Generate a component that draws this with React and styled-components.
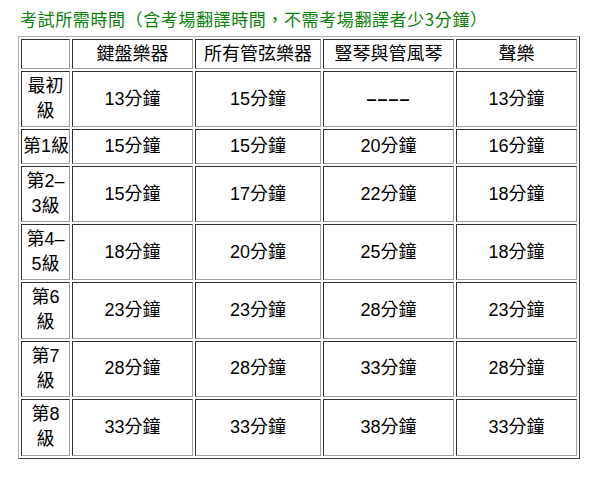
import React from "react";
import styled, { createGlobalStyle } from "styled-components";

const Global = createGlobalStyle`
  html, body { margin: 0; padding: 0; background: #fff; }
  body { font-family: "Liberation Sans", "Noto Sans CJK TC", sans-serif; }
`;

const Page = styled.div`
  padding: 7px 0 0 18px;
`;

const Title = styled.div`
  font-family: "AR PL UKai TW", "AR PL UKai", "Noto Sans CJK TC", serif;
  font-size: 17px;
  line-height: 24px;
  letter-spacing: 0.6px;
  color: #0a820a;
  padding-left: 2px;
  margin-bottom: 5px;
`;

const Table = styled.table`
  border-collapse: separate;
  border-spacing: 2px;
  border-style: solid;
  border-width: 1px;
  border-color: #b0b0b0 #404040 #404040 #b0b0b0;
  table-layout: fixed;
  width: 562px;
`;

const Row = styled.tr`
  height: ${(p) => p.$h}px;
`;

const Cell = styled.td`
  box-sizing: border-box;
  width: ${(p) => p.$w}px;
  padding: 1px;
  border-style: solid;
  border-width: 1px;
  border-color: #303030 #a0a0a0 #a0a0a0 #303030;
  text-align: center;
  vertical-align: middle;
  font-family: "Liberation Sans", "Noto Sans CJK TC", sans-serif;
  font-size: 18px;
  line-height: 25px;
  color: #000;
  white-space: nowrap;
`;

const Dash = styled.span`
  letter-spacing: 1px;
  font-weight: 700;
`;

const widths = [49, 121, 126, 131, 121];
const headers = ["", "鍵盤樂器", "所有管弦樂器", "豎琴與管風琴", "聲樂"];

const rows = [
  { label: ["最初", "級"], v: ["13分鐘", "15分鐘", null, "13分鐘"], h: 56 },
  { label: ["第1級"], v: ["15分鐘", "15分鐘", "20分鐘", "16分鐘"], h: 35 },
  { label: ["第2–", "3級"], v: ["15分鐘", "17分鐘", "22分鐘", "18分鐘"], h: 56 },
  { label: ["第4–", "5級"], v: ["18分鐘", "20分鐘", "25分鐘", "18分鐘"], h: 56 },
  { label: ["第6", "級"], v: ["23分鐘", "23分鐘", "28分鐘", "23分鐘"], h: 56.5 },
  { label: ["第7", "級"], v: ["28分鐘", "28分鐘", "33分鐘", "28分鐘"], h: 56.5 },
  { label: ["第8", "級"], v: ["33分鐘", "33分鐘", "38分鐘", "33分鐘"], h: 56.5 },
];

export default function App() {
  return (
    <>
      <Global />
      <Page>
        <Title>考試所需時間（含考場翻譯時間，不需考場翻譯者少3分鐘）</Title>
        <Table>
          <tbody>
            <Row $h={30}>
              {headers.map((h, i) => (
                <Cell key={i} $w={widths[i]}>{h}</Cell>
              ))}
            </Row>
            {rows.map((r, ri) => (
              <Row key={ri} $h={r.h}>
                <Cell $w={widths[0]}>
                  {r.label.map((l, li) => (
                    <React.Fragment key={li}>
                      {li > 0 && <br />}
                      {l}
                    </React.Fragment>
                  ))}
                </Cell>
                {r.v.map((v, vi) => (
                  <Cell key={vi} $w={widths[vi + 1]}>
                    {v === null ? <Dash>––––</Dash> : v}
                  </Cell>
                ))}
              </Row>
            ))}
          </tbody>
        </Table>
      </Page>
    </>
  );
}
